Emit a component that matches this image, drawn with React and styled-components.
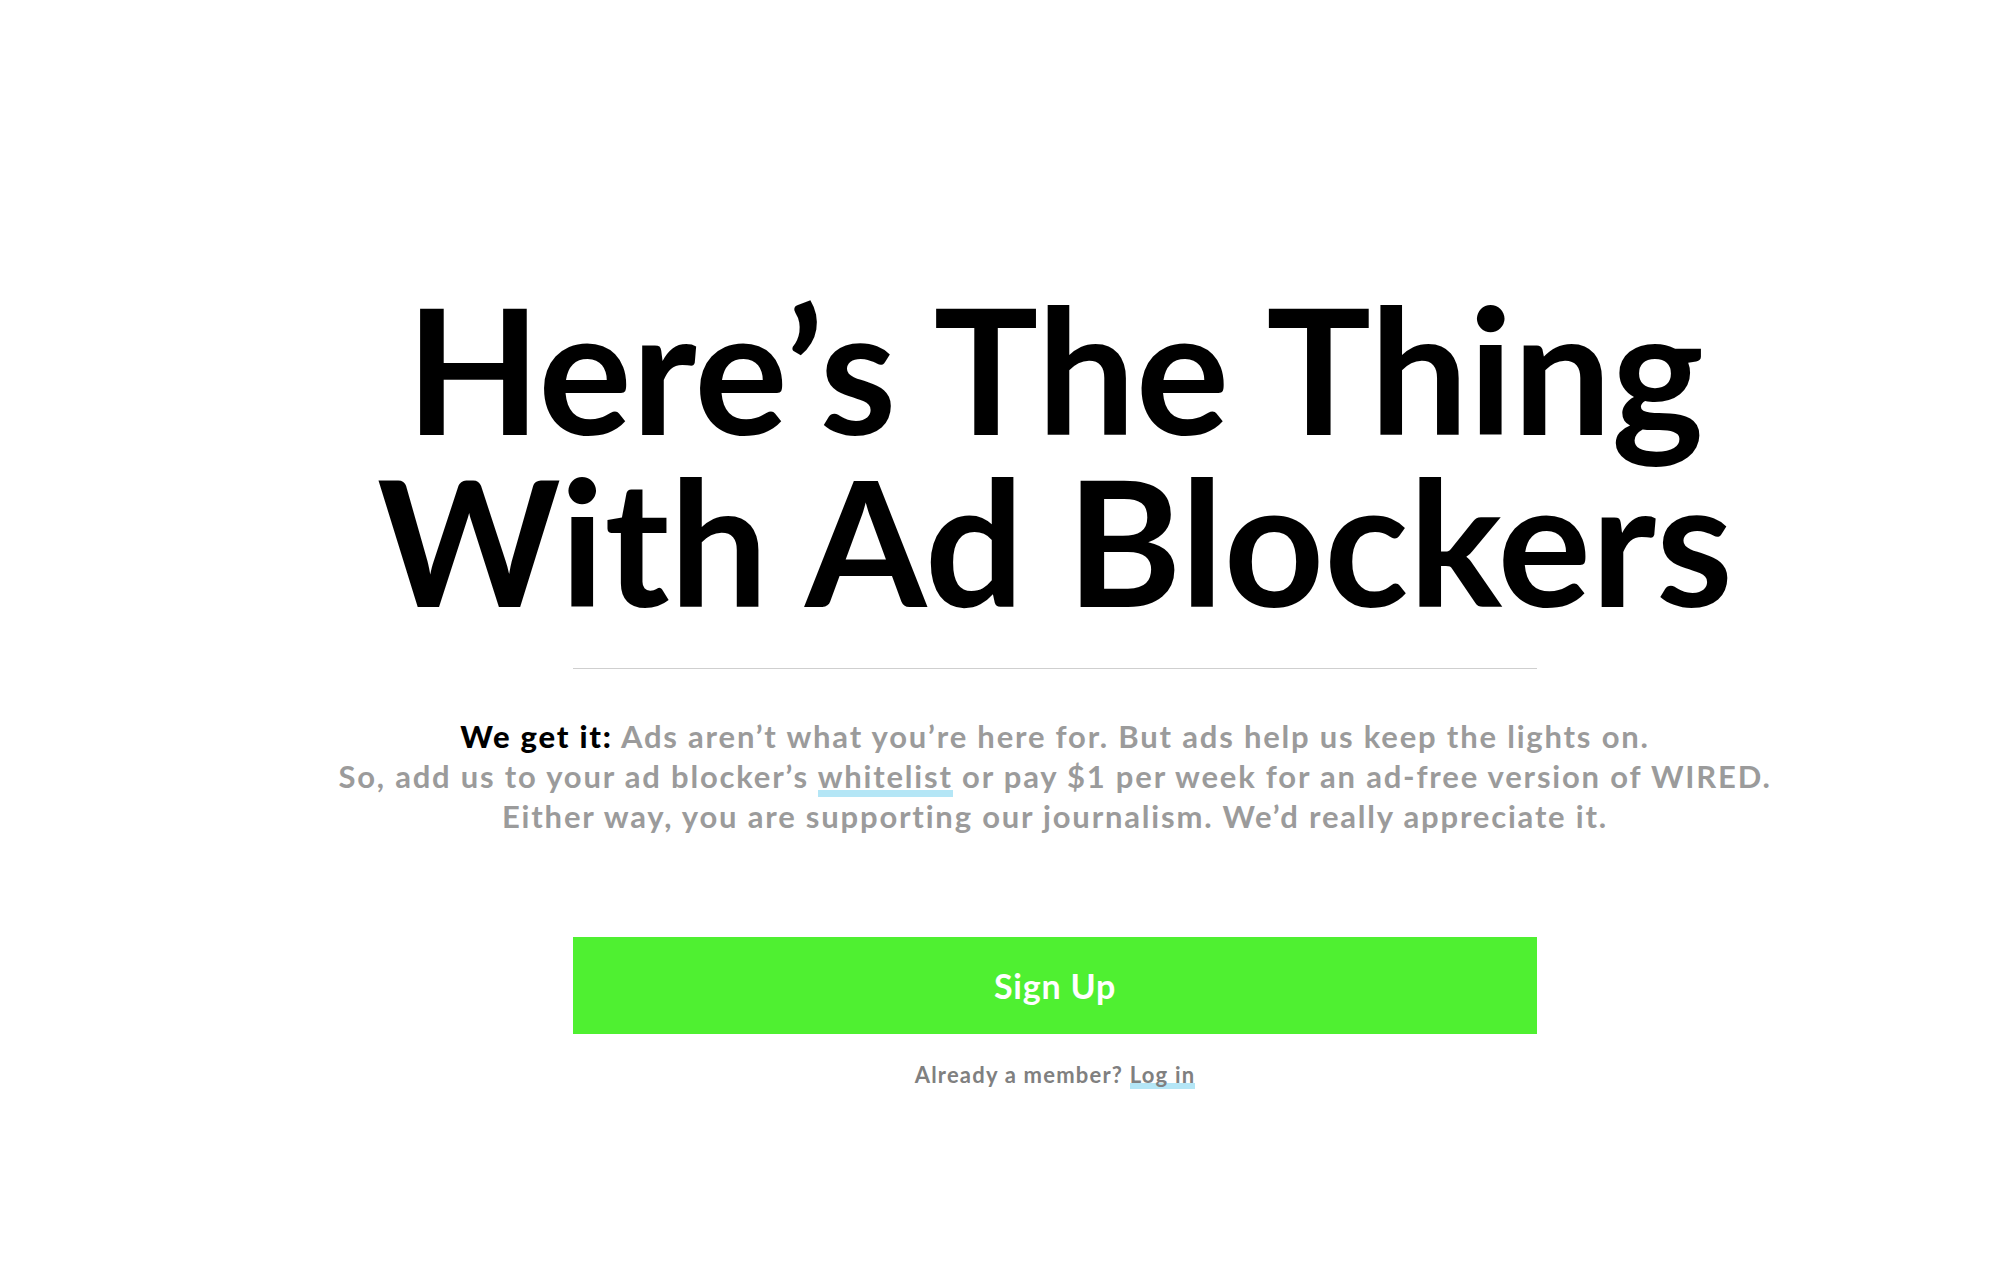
import React from "react";
import styled, { createGlobalStyle } from "styled-components";

const Global = createGlobalStyle`
  html, body { margin: 0; padding: 0; background: #ffffff; }
  body { font-family: Lato, "Noto Sans", sans-serif; }
`;

const Page = styled.main`
  min-height: 1268px;
  box-sizing: border-box;
  padding: 281px 0 0 116px;
  display: flex;
  flex-direction: column;
  align-items: center;
`;

const Headline = styled.h1`
  margin: 0;
  font-family: Lato, sans-serif;
  font-weight: 700;
  font-size: 175px;
  line-height: 172px;
  color: #000;
  text-align: center;
`;

const HeadLine = styled.span`
  display: block;
  white-space: nowrap;
`;

const Divider = styled.hr`
  width: 964px;
  height: 0;
  border: 0;
  border-top: 1px solid #cfcfcf;
  margin: 43px 0 0;
`;

const Lede = styled.p`
  margin: 47px 0 0;
  font-family: Lato, sans-serif;
  font-weight: 700;
  font-size: 31px;
  line-height: 40px;
  letter-spacing: 1.8px;
  color: #9b9b9b;
  text-align: center;
  white-space: nowrap;
`;

const Strong = styled.span`
  color: #000;
  font-weight: 900;
`;

const Link = styled.a`
  color: inherit;
  text-decoration: none;
  padding-bottom: ${(p) => p.$pad}px;
  background-image: linear-gradient(#b4e6f6, #b4e6f6);
  background-repeat: no-repeat;
  background-position: 0 100%;
  background-size: 100% ${(p) => p.$bar}px;
`;

const Button = styled.button`
  margin-top: 101px;
  width: 964px;
  height: 97px;
  padding: 0;
  border: 0;
  background: #4ff031;
  color: #fff;
  font-family: Lato, sans-serif;
  font-weight: 700;
  font-size: 34px;
  letter-spacing: 0.8px;
  cursor: pointer;
`;

const Member = styled.p`
  margin: 26px 0 0;
  font-family: Lato, sans-serif;
  font-weight: 700;
  font-size: 22px;
  line-height: 30px;
  letter-spacing: 1.2px;
  color: #808080;
`;

export default function App() {
  return (
    <>
      <Global />
      <Page>
        <Headline>
          <HeadLine>Here’s The Thing</HeadLine>
          <HeadLine>With Ad Blockers</HeadLine>
        </Headline>
        <Divider />
        <Lede>
          <Strong>We get it:</Strong> Ads aren’t what you’re here for. But ads help us keep the lights on.
          <br />
          So, add us to your ad blocker’s{" "}
          <Link href="#" $pad={2} $bar={7}>whitelist</Link> or pay $1 per week for an ad-free version of WIRED.
          <br />
          Either way, you are supporting our journalism. We’d really appreciate it.
        </Lede>
        <Button>Sign Up</Button>
        <Member>
          Already a member?{" "}
          <Link href="#" $pad={1} $bar={6}>Log in</Link>
        </Member>
      </Page>
    </>
  );
}
